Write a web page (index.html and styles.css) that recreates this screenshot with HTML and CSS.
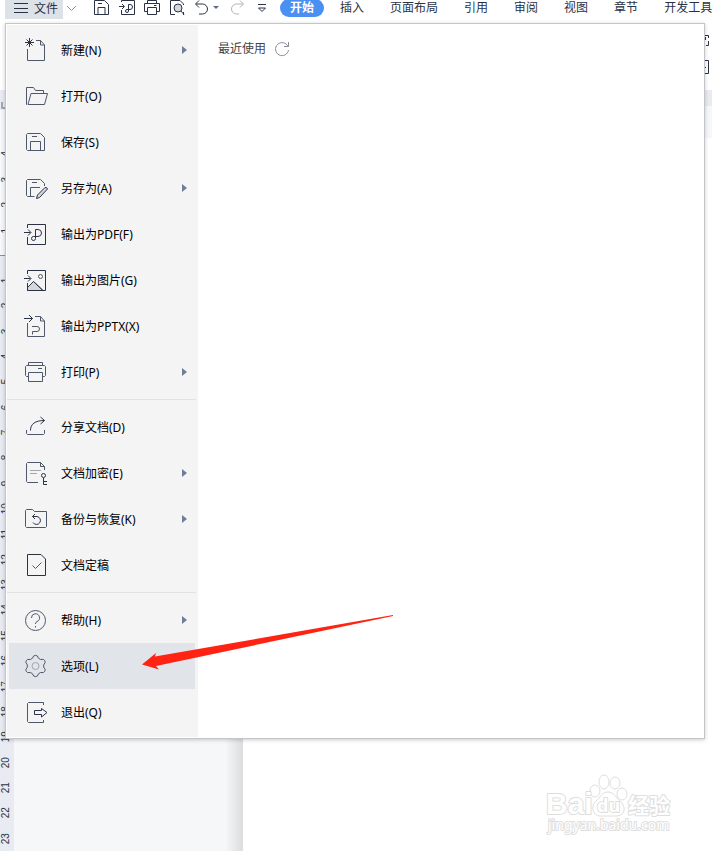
FILE: index.html
```html
<!DOCTYPE html>
<html lang="zh-CN">

<head>
    <meta charset="utf-8">
    <meta name="viewport" content="width=device-width, initial-scale=1">
    <title>文件</title>
    <link rel="stylesheet" href="styles.css">
</head>

<body>
    <header class="topbar">
        <button class="file-btn" type="button">
            <svg width="14" height="12" viewBox="0 0 14 12"><path d="M0 1.5H14M0 6.5H14M0 10.5H14" /></svg>
            文件
        </button>
        <button class="tool chevron" type="button" aria-label="更多">
            <svg width="16" height="16" viewBox="0 0 16 16"><path d="M4 6l4.5 4.5L13 6" /></svg>
        </button>
        <span class="divider"></span>
        <div class="tools">
            <button class="tool" type="button" aria-label="保存">
                <svg width="16" height="16" viewBox="0 0 16 16"><path d="M.5.5H10.500L14.500 4.500V14.500H.5zM4 14.500V7.500H11V14.500M4 3.500H8" /></svg>
            </button>
            <button class="tool" type="button" aria-label="输出为PDF">
                <svg width="16" height="16" viewBox="0 0 16 16"><path d="M2.500 2V.5H15.500V14.500H2.500V10M0 6.500H5M3 4L5.500 6.500L3 9M9.500 11V4.500H11a2.500 2.500 0 0 1 0 5H8a1.500 1.500 0 1 0 1.500 1.500" /></svg>
            </button>
            <button class="tool" type="button" aria-label="打印">
                <svg width="16" height="16" viewBox="0 0 16 16"><path d="M3.500 3.500V.5H12.500V3.500M3 11.500H.5V3.500H15.500V11.500H13M3.500 7.500H12.500V14.500H3.500zM10 5.500H12.500" /></svg>
            </button>
            <button class="tool" type="button" aria-label="打印预览">
                <svg width="16" height="16" viewBox="0 0 16 16"><path d="M6 14.500H1.500V.5H11L14.500 4V5M14.500 12V15" /><circle class="shade" cx="9" cy="8" r="4" /><path d="M12 11l3 3.500" /></svg>
            </button>
            <button class="tool" type="button" aria-label="撤销">
                <svg width="26" height="16" viewBox="0 0 26 16"><path d="M5 .5L1.500 4L5 7.500M2 4H8.500a5 5 0 0 1 0 10H5" /><path class="solid" d="M19 6H25L22 9z" /></svg>
            </button>
            <button class="tool redo" type="button" aria-label="恢复">
                <svg width="16" height="16" viewBox="0 0 16 16"><path d="M11 .5L14.500 4L11 7.500M14 4H7.500a5 5 0 0 0 0 10H10" /></svg>
            </button>
            <button class="tool" type="button" aria-label="自定义">
                <svg width="16" height="16" viewBox="0 0 16 16"><path d="M4 4.500H12M4.500 8L8 11.500L11.500 8z" /></svg>
            </button>
        </div>
        <span class="divider"></span>
        <nav class="tabs">
            <button class="tab active" type="button">开始</button>
            <button class="tab" type="button">插入</button>
            <button class="tab" type="button">页面布局</button>
            <button class="tab" type="button">引用</button>
            <button class="tab" type="button">审阅</button>
            <button class="tab" type="button">视图</button>
            <button class="tab" type="button">章节</button>
            <button class="tab" type="button">开发工具</button>
        </nav>
    </header>

    <div class="ribbon">
        <svg width="12" height="12" viewBox="0 0 12 12"><path d="M2 1.500H11.500V4M5 4.500H8.500M8.500 3V6M11.500 7V11.500H9" /></svg>
        <svg width="12" height="14" viewBox="0 0 12 14"><path d="M1 .5H11.500V13.500H1M3 7.500H9" /></svg>
    </div>

    <main class="workspace">
        <div class="ruler">
            <svg class="tab-mark" width="6" height="8" viewBox="0 0 6 8"><path d="M1 0V6H6" /></svg>
            <div class="ruler-margin">
                <span>4</span><span>3</span><span>2</span><span>1</span>
            </div>
            <div class="ruler-body">
                <span>1</span><span>2</span><span>3</span><span>4</span><span>5</span><span>6</span>
                <span>7</span><span>8</span><span>9</span><span>10</span><span>11</span><span>12</span>
                <span>13</span><span>14</span><span>15</span><span>16</span><span>17</span><span>18</span>
                <span>19</span><span>20</span><span>21</span><span>22</span><span>23</span>
            </div>
        </div>
        <div class="canvas">
            <div class="h-ruler"></div>
            <div class="page"></div>
        </div>
    </main>

    <div class="file-menu">
        <nav class="menu-list">
            <button class="item" type="button">
                <svg class="icon" viewBox="0 0 24 24"><path d="M3.500 11V22.500H20.500V7L16.500 2.500H12M16.500 2.500V7H20.500" /><path class="dark" d="M5.500 0V9M1 4.500H10M2.500 1.500L8.500 7.500M8.500 1.500L2.500 7.500" /></svg>
                <span class="label">新建(N)</span><i class="arrow"></i>
            </button>
            <button class="item" type="button">
                <svg class="icon" viewBox="0 0 24 24"><path d="M3 20.500H2.500V3.500H9.500L11.500 6.500H19.500V9.500M4 20.500L7 9.500H23.500L20.500 20.500z" /></svg>
                <span class="label">打开(O)</span>
            </button>
            <button class="item" type="button">
                <svg class="icon" viewBox="0 0 24 24"><path d="M3.500 3.500H16.500L20.500 7.500V20.500H3.500L2.500 19.500V4.500zM6.500 20.500V11.500H16.500V20.500M8 6.500H13" /></svg>
                <span class="label">保存(S)</span>
            </button>
            <button class="item" type="button">
                <svg class="icon" viewBox="0 0 24 24"><path d="M10.500 20.500H3.500L2.500 19.500V4.500L3.500 3.500H16.500L20.500 7.500V10M6.500 20.500V11.500H16M8 6.500H13" /><path class="shade dark" d="M12.500 22.500L13.500 19L21 11.500Q23 11 23.500 13L15.500 21.500z" /></svg>
                <span class="label">另存为(A)</span><i class="arrow"></i>
            </button>
            <button class="item" type="button">
                <svg class="icon" viewBox="0 0 24 24"><path class="dark" d="M3.500 6V2.500H21.500V22.500H3.500V15M0 10.500H6.500M4 7.500L7 10.500L4 13.500M11.500 16.500V7.500H14a3.500 3.500 0 0 1 0 7H9.500a2 2 0 1 0 2 2" /></svg>
                <span class="label">输出为PDF(F)</span>
            </button>
            <button class="item" type="button">
                <svg class="icon" viewBox="0 0 24 24"><path class="shade" d="M3.500 19.500L9.500 13.500L19 22.500H3.500z" /><path class="dark" d="M3.500 6V2.500H21.500V22.500H3.500V15M0 10.500H6.500M4 7.500L7 10.500L4 13.500M3.500 19.500L9.500 13.500L19 22.500" /><circle cx="16.500" cy="8.500" r="2" /></svg>
                <span class="label">输出为图片(G)</span>
            </button>
            <button class="item" type="button">
                <svg class="icon" viewBox="0 0 24 24"><path d="M3.500 9V22.500H20.500V7L16.500 2.500H11M16.500 2.500V7H20.500M8 12.500H13a2.500 2.500 0 0 1 0 5H8.500V20.500" /><path class="dark" d="M0 4.500H8.500M5 1L8.500 4.500L5 8" /></svg>
                <span class="label">输出为PPTX(X)</span>
            </button>
            <button class="item" type="button">
                <svg class="icon" viewBox="0 0 24 24"><path d="M4.500 5.500V2.500H18.500V5.500M4.500 16.500H2.500L1.500 15.500V6.500L2.500 5.500H20.500L21.500 6.500V15.500L20.500 16.500H18.500M4.500 12.500H18.500V21.500H4.500zM14 8.500H18" /></svg>
                <span class="label">打印(P)</span><i class="arrow"></i>
            </button>
            <hr>
            <button class="item" type="button">
                <svg class="icon" viewBox="0 0 24 24"><path d="M2.500 15V18.500L3.500 19.500H19.500L20.500 18.500V15" /><path class="dark" d="M6.500 15.500C6.500 9 11 5.500 20.500 5.500M16.500 2L20.500 5.500L16.500 9" /></svg>
                <span class="label">分享文档(D)</span>
            </button>
            <button class="item" type="button">
                <svg class="icon" viewBox="0 0 24 24"><path d="M14 21.500H3.500L2.500 20.500V2.500L3.500 1.500H16.500L20.500 5.500V9M16.500 1.500V5.500H20.500" /><path class="light" d="M6 9.500H17M6 12.500H13" /><path class="dark" d="M19.500 17V23.500H23M19.500 20.500H23" /><circle class="dark" cx="19.500" cy="14.500" r="2" /></svg>
                <span class="label">文档加密(E)</span><i class="arrow"></i>
            </button>
            <button class="item" type="button">
                <svg class="icon" viewBox="0 0 24 24"><path d="M2.500 2.500H8.500L10.500 4.500H22.500V19.500L21.500 20.500H2.500L1.500 19.500V3.500z" /><path class="dark" d="M8.500 9.500H13a4 4 0 1 1-4 6M11 7L8.500 9.500L11 12" /></svg>
                <span class="label">备份与恢复(K)</span><i class="arrow"></i>
            </button>
            <button class="item" type="button">
                <svg class="icon" viewBox="0 0 24 24"><path class="dark" d="M3.500 1.500H17L21.500 6V22.500H3.500z" /><path d="M8.500 12.500L11.500 15.500L17.500 9.500" /></svg>
                <span class="label">文档定稿</span>
            </button>
            <hr>
            <button class="item" type="button">
                <svg class="icon" viewBox="0 0 24 24"><circle cx="11.500" cy="12.500" r="10" /><path d="M7.500 10a4 4 0 1 1 5.500 3.500q-1.500.7-1.500 2.500M11.500 18V19.500" /></svg>
                <span class="label">帮助(H)</span><i class="arrow"></i>
            </button>
            <button class="item selected" type="button">
                <svg class="icon" viewBox="0 0 24 24"><path d="M9.700 1.900Q11.500.9 13.300 1.900L14.600 4.300L16.600 5.500L19.400 5.400Q21.200 6.400 21.200 8.500L19.700 10.800V13.200L21.200 15.500Q21.200 17.600 19.400 18.600L16.600 18.500L14.600 19.700L13.300 22.100Q11.500 23.100 9.700 22.100L8.400 19.700L6.400 18.500L3.600 18.600Q1.800 17.600 1.800 15.500L3.300 13.200V10.800L1.800 8.500Q1.800 6.400 3.600 5.400L6.400 5.500L8.400 4.300z" /><circle class="light" cx="11.500" cy="12" r="3.500" /></svg>
                <span class="label">选项(L)</span>
            </button>
            <button class="item" type="button">
                <svg class="icon" viewBox="0 0 24 24"><path d="M19.500 5V2.500H4.500L3.500 3.500V21.500L4.500 22.500H19.500V20" /><path class="dark" d="M10.500 10.500H17.500V8.500L23 12.500L17.500 17V14.500H10.500z" /></svg>
                <span class="label">退出(Q)</span>
            </button>
        </nav>
        <section class="recent">
            <h2>最近使用</h2>
            <button class="refresh" type="button" aria-label="刷新">
                <svg width="16" height="16" viewBox="0 0 16 16"><path d="M14 5.500A6.500 6.500 0 1 0 14.500 9M14.500 1V5.500H10" /></svg>
            </button>
        </section>
        <svg class="pointer" width="252" height="58" viewBox="0 0 252 58"><path d="M0 50.500L14 39L13 42.500L251 1V2L14 52L17 55.500z" /></svg>
    </div>

    <svg class="watermark" width="136" height="70" viewBox="0 0 136 70">
        <ellipse cx="53" cy="21" rx="5" ry="6" />
        <ellipse cx="62" cy="12" rx="5" ry="7" />
        <ellipse cx="73" cy="13" rx="5" ry="6" />
        <ellipse cx="80" cy="24" rx="5" ry="6" />
        <path d="M66 22C60 22 58 28 54 31C48 36 51 46 58 46H75C84 45 84 36 78 31C74 28 72 22 66 22z" />
        <text class="wm-big" x="4" y="44">Bai</text>
        <text class="wm-du" x="55" y="42">du</text>
        <text class="wm-cn" x="86" y="43">经验</text>
        <text class="wm-url" x="6" y="60">jingyan.baidu.com</text>
    </svg>
</body>

</html>
```
FILE: styles.css
```css
* {
    box-sizing: border-box;
}

body {
    margin: 0;
    min-height: 100vh;
    display: flex;
    flex-direction: column;
    position: relative;
    overflow: hidden;
    background: #fff;
    font-family: "Noto Sans", "Noto Sans CJK SC", sans-serif;
    font-size: 12px;
    color: #2b3245;
}

button {
    border: 0;
    padding: 0;
    margin: 0;
    background: none;
    font: inherit;
    color: inherit;
    cursor: pointer;
}

svg {
    display: block;
    flex: none;
    fill: none;
    stroke: #2b3245;
    stroke-linejoin: round;
}

/* top bar */
.topbar {
    display: flex;
    align-items: center;
    height: 22px;
    margin-top: -3px;
    padding-left: 5px;
    white-space: nowrap;
}

.file-btn {
    display: flex;
    align-items: center;
    gap: 6px;
    height: 22px;
    padding: 0 5px 0 9px;
    background: #dde2e8;
}

.tool {
    display: flex;
}

.chevron {
    margin-right: 5px;
}

.chevron svg {
    stroke: #8d929e;
}

.redo svg {
    stroke: #b0b3ba;
}

.divider {
    width: 1px;
    height: 22px;
    background: #d8dbe3;
}

.tools {
    display: flex;
    gap: 9px;
    padding: 0 4px 0 10px;
}

.solid {
    fill: #5f6b85;
    stroke: none;
}

.shade {
    fill: #d4d7dc;
}

.tabs {
    display: flex;
    gap: 6px;
    margin-left: 6px;
}

.tab {
    height: 18px;
    padding: 0 10px;
    border-radius: 10px;
    line-height: 18px;
}

.tab.active {
    background: #4990f2;
    color: #fff;
    font-weight: bold;
}

.ribbon {
    display: flex;
    flex-direction: column;
    align-items: flex-end;
    gap: 14px;
    height: 71px;
    padding: 15px 3px 0 0;
}

/* document area */
.workspace {
    flex: 1;
    display: flex;
}

.ruler {
    width: 14px;
    display: flex;
    flex-direction: column;
    background: #e8ebf2;
    font-size: 10px;
    line-height: 10px;
    color: #2b3245;
    font-family: "Liberation Sans", sans-serif;
}

.tab-mark {
    margin: 12px 0 0 1px;
    stroke: #a4a8b5;
    stroke-width: 2;
}

.ruler-margin,
.ruler-body {
    display: flex;
    flex-direction: column;
}

.ruler-margin {
    height: 146px;
    padding: 31px 0 12px;
    background: #f6f7fa;
    border-bottom: 1px solid #8490a8;
}

.ruler-body {
    height: 595px;
    padding-top: 12px;
}

.ruler span {
    flex: 1;
    display: flex;
    align-items: center;
    justify-content: center;
    width: 12px;
    writing-mode: vertical-rl;
    transform: rotate(180deg);
}

.canvas {
    flex: 1;
    display: flex;
    flex-direction: column;
    background: #f5f7f9;
}

.h-ruler {
    height: 16px;
    margin-bottom: 32px;
    background: #e8ebf0;
}

.page {
    flex: 1;
    padding-left: 229px;
    background: linear-gradient(to left, #dadcde, #f5f7f9) 211px 0 / 18px 100% no-repeat, #fff content-box;
    background-color: transparent;
    background-clip: border-box;
}

.page::before {
    content: "";
    display: block;
    height: 100%;
    background: #fff;
}

/* file menu */
.file-menu {
    position: absolute;
    top: 23px;
    left: 5px;
    right: 7px;
    display: flex;
    padding: 1px;
    border: 1px solid #c4c5c8;
    background: #fff;
    box-shadow: 0 1px 4px #00000033;
}

.menu-list {
    width: 191px;
    padding: 2px 0;
    background: #f4f4f4;
    color: #000;
}

.menu-list hr {
    height: 1px;
    margin: 4px 2px 4px 0;
    border: 0;
    background: #e1e2e6;
}

.item {
    display: flex;
    align-items: center;
    width: 186px;
    height: 46px;
    margin-left: 2px;
    padding: 0 8px 0 15px;
    text-align: left;
}

.item.selected {
    background: #e1e4e9;
}

.icon {
    width: 24px;
    height: 24px;
    margin-right: 13px;
    stroke: #4f576b;
}

.icon .dark {
    stroke: #2b3245;
}

.icon .light {
    stroke: #a3a6ad;
}

.label {
    flex: 1;
}

.arrow {
    border: 4px solid transparent;
    border-left: 5px solid #717d97;
    border-right: 0;
}

.recent {
    flex: 1;
    display: flex;
    align-items: flex-start;
    gap: 8px;
    padding: 16px 20px;
}

.recent h2 {
    margin: 0;
    font-size: 12px;
    font-weight: normal;
    line-height: 16px;
    color: #444;
}

.refresh svg {
    stroke: #8a8e99;
}

.pointer {
    position: absolute;
    left: 136px;
    top: 590px;
    fill: #ff2314;
    stroke: none;
}

.watermark {
    position: absolute;
    right: 34px;
    bottom: 11px;
    fill: #fff;
    stroke: #dedede;
    font-family: "Noto Sans", "Noto Sans CJK SC", sans-serif;
}

.watermark text {
    paint-order: stroke;
    stroke-width: 2;
}

.wm-big {
    font-family: "Liberation Sans", sans-serif;
    font-size: 30px;
    font-weight: bold;
}

.wm-du {
    font-size: 18px;
    font-weight: bold;
}

.wm-cn {
    font-size: 21px;
    font-weight: bold;
}

.wm-url {
    font-size: 14px;
}
```
